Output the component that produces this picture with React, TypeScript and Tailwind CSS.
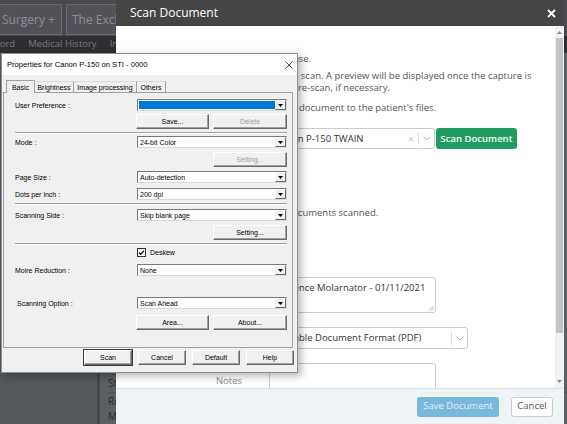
import React from "react";

function Tri() {
  return (
    <svg width="5" height="3" viewBox="0 0 5 3">
      <path d="M0 0H5L2.5 3Z" fill="#000" />
    </svg>
  );
}

function Combo({ value = "", blue = false }: { value?: string; blue?: boolean }) {
  return (
    <div className="w-[150px] h-[12px] flex bg-white border border-t-[#7a7a7a] border-l-[#7a7a7a] border-b-[#d8d8d8] border-r-[#d8d8d8]">
      {blue ? (
        <div className="flex-1 bg-[#0078d7] my-[1px] ml-[1px]" />
      ) : (
        <div className="flex-1 flex items-center pl-[2px] text-[7px] leading-none whitespace-nowrap">{value}</div>
      )}
      <div className="w-[11px] h-[10px] bg-[#f0f0f0] border border-t-[#f8f8f8] border-l-[#f8f8f8] border-b-[#6a6a6a] border-r-[#6a6a6a] flex items-center justify-center">
        <Tri />
      </div>
    </div>
  );
}

function WBtn({
  label,
  w,
  disabled = false,
  def = false,
}: {
  label: string;
  w: string;
  disabled?: boolean;
  def?: boolean;
}) {
  return (
    <div
      className={`${w} h-[15px] flex items-center justify-center text-[7px] leading-none bg-[#f0f0f0] border border-t-white border-l-white border-b-[#696969] border-r-[#696969] shadow-[inset_-1px_-1px_0_#a0a0a0] ${
        disabled ? "text-[#a0a0a0]" : "text-black"
      } ${def ? "outline outline-1 outline-[#3c3c3c]" : ""}`}
    >
      {label}
    </div>
  );
}

function Row({
  label,
  children,
  className = "",
  labelClass = "",
}: {
  label: string;
  children: React.ReactNode;
  className?: string;
  labelClass?: string;
}) {
  return (
    <div className={`flex items-center pl-[11px] ${className}`}>
      <div className={`w-[122px] text-[7px] leading-none whitespace-nowrap ${labelClass}`}>{label}</div>
      {children}
    </div>
  );
}

function Sep({ className = "" }: { className?: string }) {
  return <div className={`ml-[11px] w-[272px] h-[2px] border-t border-t-[#a0a0a0] border-b border-b-white ${className}`} />;
}

function Chevron({ color = "#bbb" }: { color?: string }) {
  return (
    <svg width="8" height="5" viewBox="0 0 8 5">
      <path d="M0.5 0.5L4 4L7.5 0.5" fill="none" stroke={color} strokeWidth="1" />
    </svg>
  );
}

function FormRow({
  label,
  children,
  className = "",
}: {
  label: string;
  children: React.ReactNode;
  className?: string;
}) {
  return (
    <div className={`flex items-center ${className}`}>
      <div className="w-[112px] mr-[27px] text-right text-[#8a8a8a]">{label}</div>
      {children}
    </div>
  );
}

export default function App() {
  return (
    <div className="relative w-[567px] h-[424px] overflow-hidden bg-[#55595b] font-['Open_Sans',sans-serif]">
      {/* background application (dimmed) */}
      <div className="flex flex-col h-full">
        <div className="h-[36px] bg-[#4a494e] flex items-end gap-[4px] overflow-hidden">
          <div className="-ml-[6px] h-[31px] mb-[1px] pl-[7px] pr-[6px] border border-[#6c6a71] bg-[#545259] text-[#8e8c93] text-[12px] flex items-center whitespace-nowrap">
            Surgery +
          </div>
          <div className="h-[31px] mb-[1px] pl-[5px] pr-[6px] border border-[#6c6a71] bg-[#545259] text-[#8e8c93] text-[12px] flex items-center whitespace-nowrap">
            The Exchange
          </div>
        </div>
        <div className="h-[17px] bg-[#2e2f32] flex items-center gap-[13px] text-[9.5px] text-[#77787b] whitespace-nowrap overflow-hidden">
          <span className="-ml-[16px]">Record</span>
          <span>Medical History</span>
          <span>Insurance</span>
        </div>
        <div className="flex-1 flex">
          <div className="w-[97px] bg-[#55595b]" />
          <div className="w-[3px] bg-[#474a4c]" />
          <div className="flex-1 bg-[#5b5f61] flex flex-col pt-[322px] pl-[8px] text-[10px] text-[#2c2f31] whitespace-nowrap overflow-hidden">
            <div className="h-[18px] border-b border-[#4d5153] flex items-center">Status</div>
            <div className="h-[16px] flex items-end">Referral</div>
            <div className="h-[14px] flex items-center">Medications</div>
          </div>
        </div>
      </div>

      {/* Scan Document modal */}
      <div className="absolute left-[116px] top-0 w-[448px] h-[424px] bg-white flex flex-col">
        <div className="h-[26px] bg-[#454545] flex items-center justify-between pl-[14px] pr-[8px] text-white text-[12px]">
          <span>Scan Document</span>
          <svg width="9" height="9" viewBox="0 0 9 9">
            <path d="M1 1L8 8M8 1L1 8" stroke="#fff" strokeWidth="1.8" />
          </svg>
        </div>
        <div className="flex-1 flex min-h-0">
          <div className="flex-1 min-w-0 overflow-hidden pl-[14px] pt-[27px] text-[9.5px] leading-[12px] text-[#555] whitespace-nowrap">
            <p className="tracking-[-0.1px]">1. Select the scanner that you wish to use.</p>
            <p className="mt-[5px]">
              2. Click on Scan Document to start the scan. A preview will be displayed once the capture is
            </p>
            <p>complete. Please review the scan and re-scan, if necessary.</p>
            <p className="mt-[8px] pl-[2px]">3. Click on Save Document to add the document to the patient's files.</p>

            <FormRow label="Scanner" className="mt-[14px]">
              <div className="w-[166px] h-[21px] border border-[#cccccc] rounded-[3px] flex items-center pl-[5px] text-[#333]">
                <span className="flex-1">Canon P-150 TWAIN</span>
                <span className="w-[14px] text-center text-[#c4c4c4] text-[11px]">×</span>
                <span className="w-px h-[13px] bg-[#dddddd]" />
                <span className="w-[15px] flex justify-center">
                  <Chevron />
                </span>
              </div>
              <div className="ml-[1px] w-[81px] h-[21px] bg-[#1f9d60] rounded-[3px] text-white font-semibold flex items-center justify-center">
                Scan Document
              </div>
            </FormRow>

            <FormRow label="Documents" className="mt-[58px]">
              <p className="pl-[2px]">No documents scanned.</p>
            </FormRow>

            <FormRow label="Document Name" className="mt-[58px] items-start">
              <div className="relative w-[167px] h-[36px] border border-[#cccccc] rounded-[3px] px-[6px] pt-[4px] text-[#333]">
                Clarence Molarnator - 01/11/2021
                <svg className="absolute right-[1px] bottom-[1px]" width="6" height="6" viewBox="0 0 6 6">
                  <path d="M5.5 1L1 5.5M5.5 3.5L3.5 5.5" stroke="#999" strokeWidth="0.8" />
                </svg>
              </div>
            </FormRow>

            <FormRow label="File Type" className="mt-[14px]">
              <div className="w-[199px] h-[22px] border border-[#cccccc] rounded-[3px] flex items-center pl-[5px] text-[#333]">
                <span className="flex-1">Portable Document Format (PDF)</span>
                <span className="w-px h-[13px] bg-[#dddddd]" />
                <span className="w-[15px] flex justify-center">
                  <Chevron />
                </span>
              </div>
            </FormRow>

            <FormRow label="Notes" className="mt-[14px]">
              <div className="w-[167px] h-[36px] border border-[#cccccc] rounded-[3px]" />
            </FormRow>
          </div>
          {/* scrollbar */}
          <div className="w-[9px] bg-[#f1f1f1] flex flex-col items-center pt-[4px] pb-[4px]">
            <svg width="5" height="3" viewBox="0 0 5 3" className="mt-[1px]">
              <path d="M0 3H5L2.5 0Z" fill="#8a8a8a" />
            </svg>
            <div className="mt-[4px] w-[7px] h-[295px] bg-[#c3c3c3]" />
            <div className="flex-1" />
            <svg width="5" height="3" viewBox="0 0 5 3" className="mb-[1px]">
              <path d="M0 0H5L2.5 3Z" fill="#8a8a8a" />
            </svg>
          </div>
        </div>
        <div className="h-[36px] border-t border-[#dbe2e6] bg-[#eef3f6] flex items-center justify-end gap-[12px] pr-[11px] text-[9.5px]">
          <div className="w-[82px] h-[20px] bg-[#7ab7dd] rounded-[3px] text-[#e2eff8] flex items-center justify-center">
            Save Document
          </div>
          <div className="w-[42px] h-[20px] bg-white border border-[#cccccc] rounded-[3px] text-[#555] flex items-center justify-center">
            Cancel
          </div>
        </div>
      </div>

      {/* Canon TWAIN properties window */}
      <div className="absolute left-[1px] top-[53px] w-[297px] h-[320px] bg-[#f0f0f0] border border-[#8f8f8f] shadow-[3px_3px_8px_rgba(0,0,0,0.3)] text-black font-['Liberation_Sans',Arial,sans-serif]">
        <div className="h-[21px] bg-white flex items-center justify-between pl-[5px] pr-[4px]">
          <span className="text-[7.6px] leading-none whitespace-nowrap">Properties for Canon P-150 on STI - 0000</span>
          <svg width="8" height="8" viewBox="0 0 8 8">
            <path d="M0.5 0.5L7.5 7.5M7.5 0.5L0.5 7.5" stroke="#222" strokeWidth="0.8" />
          </svg>
        </div>
        <div className="h-[17px] flex items-end pl-[4px] text-[7px] leading-none">
          <div className="relative z-10 -mb-[1px] w-[29px] h-[13px] bg-[#f0f0f0] border-l border-t border-r border-[#a0a0a0] flex items-center justify-center">
            Basic
          </div>
          <div className="w-[39px] h-[11px] border-t border-t-[#dadada] border-r border-r-[#a0a0a0] flex items-center justify-center">
            Brightness
          </div>
          <div className="w-[63px] h-[11px] border-t border-t-[#dadada] border-r border-r-[#a0a0a0] flex items-center justify-center whitespace-nowrap">
            Image processing
          </div>
          <div className="w-[29px] h-[11px] border-t border-t-[#dadada] border-r border-r-[#a0a0a0] flex items-center justify-center">
            Others
          </div>
        </div>
        <div className="ml-[1px] w-[290px] h-[256px] border border-[#a0a0a0] bg-[#f0f0f0] flex flex-col">
          <Row label="User Preference :" className="mt-[6px] h-[12px]">
            <Combo blue />
          </Row>
          <div className="mt-[3px] ml-[132px] flex gap-[4px]">
            <WBtn w="w-[73px]" label="Save..." />
            <WBtn w="w-[74px]" label="Delete" disabled />
          </div>
          <Sep className="mt-[3px]" />
          <Row label="Mode :" className="mt-[2px] h-[12px]">
            <Combo value="24-bit Color" />
          </Row>
          <div className="mt-[4px] ml-[209px]">
            <WBtn w="w-[74px]" label="Setting..." disabled />
          </div>
          <Row label="Page Size :" className="mt-[4px] h-[12px]">
            <Combo value="Auto-detection" />
          </Row>
          <Row label="Dots per inch :" className="mt-[5px] h-[12px]">
            <Combo value="200 dpi" />
          </Row>
          <Sep className="mt-[3px]" />
          <Row label="Scanning Side :" className="mt-[4px] h-[12px]">
            <Combo value="Skip blank page" />
          </Row>
          <div className="mt-[4px] ml-[209px]">
            <WBtn w="w-[74px]" label="Setting..." />
          </div>
          <Sep className="mt-[3px]" />
          <div className="mt-[2px] h-[10px] ml-[133px] flex items-center gap-[4px] text-[7px] leading-none">
            <svg width="9" height="9" viewBox="0 0 9 9">
              <rect x="0.5" y="0.5" width="8" height="8" fill="#fff" stroke="#333" strokeWidth="1" />
              <path d="M2 4.5L3.8 6.3L7 2.6" fill="none" stroke="#111" strokeWidth="1.3" />
            </svg>
            <span>Deskew</span>
          </div>
          <Row label="Moire Reduction :" className="mt-[7px] h-[12px]">
            <Combo value="None" />
          </Row>
          <Row label="Scanning Option :" labelClass="pl-[2px]" className="mt-[21px] h-[12px]">
            <Combo value="Scan Ahead" />
          </Row>
          <div className="mt-[6px] ml-[132px] flex gap-[4px]">
            <WBtn w="w-[73px]" label="Area..." />
            <WBtn w="w-[74px]" label="About..." />
          </div>
        </div>
        <div className="mt-[2px] flex justify-end gap-[6px] pr-[3px]">
          <WBtn w="w-[48px]" label="Scan" def />
          <WBtn w="w-[48px]" label="Cancel" />
          <WBtn w="w-[48px]" label="Default" />
          <WBtn w="w-[48px]" label="Help" />
        </div>
      </div>
    </div>
  );
}
